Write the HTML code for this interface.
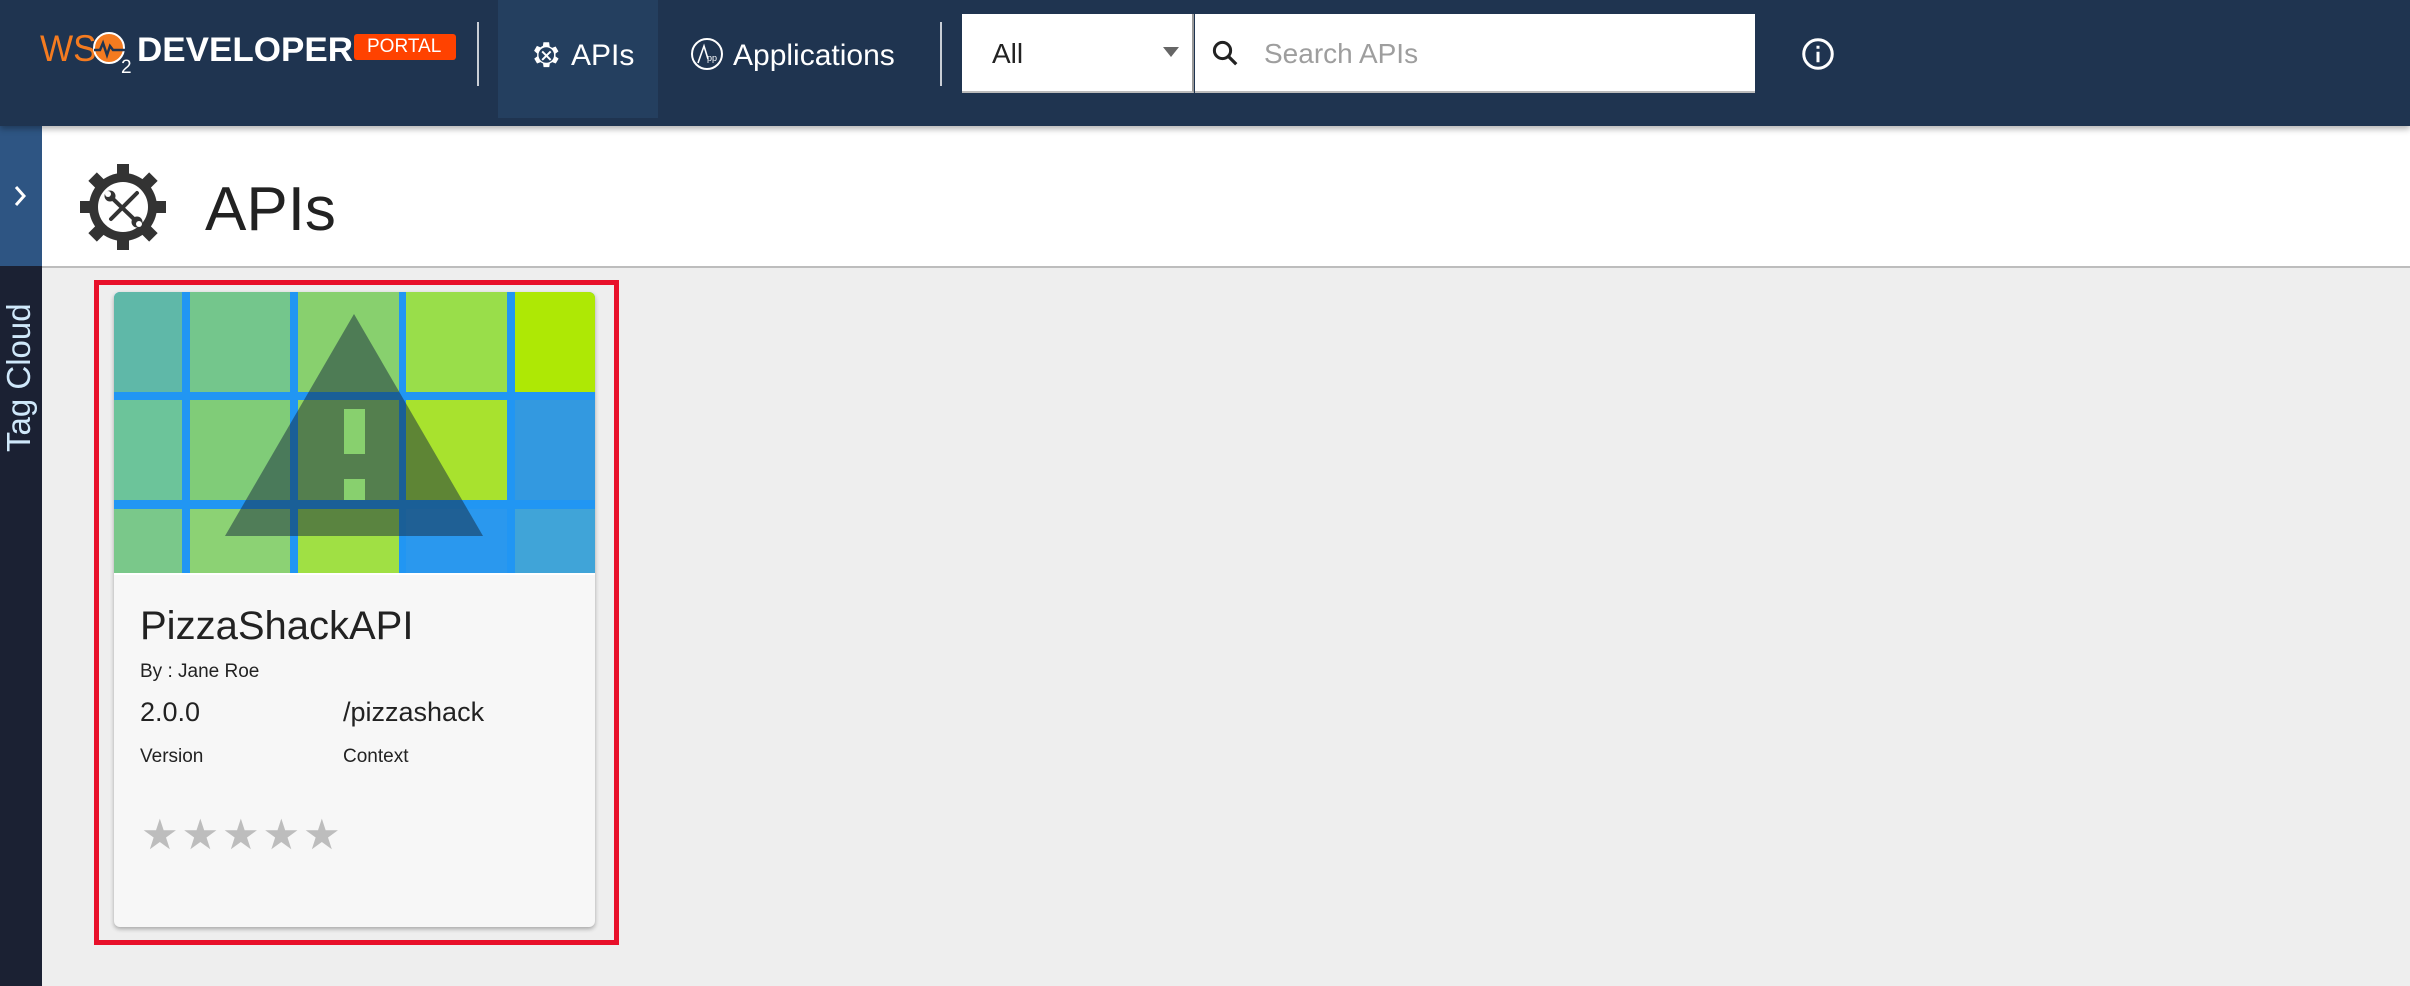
<!DOCTYPE html>
<html><head><meta charset="utf-8"><style>
*{margin:0;padding:0;box-sizing:border-box}
body{width:2410px;height:986px;overflow:hidden;background:#eeeeee;font-family:"Liberation Sans",sans-serif;position:relative}
.hdr{position:absolute;left:0;top:0;width:2410px;height:126px;background:#1f3450;box-shadow:0 3px 6px rgba(0,0,0,.3);z-index:2}
.abs{position:absolute}
.side{position:absolute;left:0;top:126px;width:42px;height:860px;background:#1b2133}
.tog{position:absolute;left:0;top:126px;width:42px;height:140px;background:#2e5583}
.title{position:absolute;left:42px;top:126px;width:2368px;height:142px;background:#fff;border-bottom:2px solid #bdbdbd}
.st{display:inline-block;width:40.5px;text-align:left}
</style></head><body>
<div class="hdr">
  <div class="abs" style="left:40px;top:28px;font-size:37px;color:#f47b20;transform-origin:0 0;transform:scaleX(0.95);white-space:nowrap">WS</div>
  <svg class="abs" style="left:92px;top:30px" width="46" height="44" viewBox="0 0 46 44"><circle cx="17" cy="18" r="15" fill="#f47b20" stroke="#fff" stroke-width="2"/><path d="M2 20 H8 L11 13 L15 25 L18 16 L21 20 H33" stroke="#1f3450" stroke-width="2.5" fill="none"/><text x="29" y="43" font-size="19" fill="#fff" font-family="Liberation Sans">2</text></svg>
  <div class="abs" style="left:137px;top:31px;font-size:34px;font-weight:bold;color:#fff;white-space:nowrap;transform-origin:0 0;transform:scaleX(1.03)">DEVELOPER</div>
  <div class="abs" style="left:354px;top:34px;width:102px;height:26px;background:#ff4200;border-radius:3px;color:#fff;font-size:19px;line-height:26px;padding-left:13px">PORTAL</div>
  <div class="abs" style="left:477px;top:22px;width:2px;height:64px;background:#c9ced6"></div>
  <div class="abs" style="left:498px;top:0;width:160px;height:118px;background:#243f5f"></div>
  <svg class="abs" style="left:528px;top:38px" width="34" height="34" viewBox="0 0 24 24"><path fill="#fff" d="M19.4 13a7.5 7.5 0 000-2l2.1-1.6-2-3.4-2.5 1a7 7 0 00-1.7-1L14.9 3h-4l-.4 2.6a7 7 0 00-1.7 1l-2.5-1-2 3.4L6.5 11a7.5 7.5 0 000 2l-2.1 1.6 2 3.4 2.5-1a7 7 0 001.7 1l.4 2.6h4l.4-2.6a7 7 0 001.7-1l2.5 1 2-3.4zM12.9 17.5a5.5 5.5 0 110-11 5.5 5.5 0 010 11z"/><path d="M10 9.5l6 6M16 9.5l-6 6" stroke="#fff" stroke-width="1.4"/></svg>
  <div class="abs" style="left:571px;top:39px;font-size:30px;color:#fff">APIs</div>
  <svg class="abs" style="left:690px;top:37px" width="34" height="34" viewBox="0 0 34 34"><circle cx="17" cy="17" r="15" stroke="#fff" stroke-width="2" fill="none"/><path d="M8 26 L14 9 L18 22" stroke="#fff" stroke-width="1.6" fill="none"/><text x="17" y="24" font-size="9" fill="#fff" font-family="Liberation Sans">pp</text></svg>
  <div class="abs" style="left:733px;top:39px;font-size:30px;color:#fff">Applications</div>
  <div class="abs" style="left:940px;top:22px;width:2px;height:64px;background:#c9ced6"></div>
  <div class="abs" style="left:962px;top:14px;width:232px;height:79px;background:#fff;border-bottom:2px solid #bbb;border-right:2px solid #999"></div>
  <div class="abs" style="left:992px;top:38px;font-size:28px;color:#222">All</div>
  <div class="abs" style="left:1163px;top:47px;width:0;height:0;border-left:8px solid transparent;border-right:8px solid transparent;border-top:10px solid #666"></div>
  <div class="abs" style="left:1195px;top:14px;width:560px;height:79px;background:#fff;border-bottom:2px solid #bbb"></div>
  <svg class="abs" style="left:1210px;top:37px" width="30" height="32" viewBox="0 0 24 24"><circle cx="10" cy="10" r="6.5" stroke="#222" stroke-width="2.4" fill="none"/><path d="M14.5 14.5 L21 21" stroke="#222" stroke-width="2.6"/></svg>
  <div class="abs" style="left:1264px;top:38px;font-size:28px;color:#9e9e9e">Search APIs</div>
  <svg class="abs" style="left:1800px;top:36px" width="36" height="36" viewBox="0 0 24 24"><circle cx="12" cy="12" r="9.5" stroke="#fff" stroke-width="2" fill="none"/><rect x="11" y="10.5" width="2" height="7" fill="#fff"/><rect x="11" y="6.5" width="2" height="2" fill="#fff"/></svg>
</div>
<div class="side"></div>
<div class="tog"></div>
<svg class="abs" style="left:10px;top:183px" width="20" height="26" viewBox="0 0 20 26"><path d="M6 4 L14 13 L6 22" stroke="#fff" stroke-width="3" fill="none"/></svg>
<div class="abs" style="left:0px;top:452px;transform-origin:0 0;transform:rotate(-90deg);font-size:33px;color:#cfe8fa;white-space:nowrap;line-height:38px">Tag Cloud</div>
<div class="title"></div>
<svg class="abs" style="left:79px;top:163px" width="88" height="88" viewBox="-44 -44 88 88">
  <g fill="#333">
    <circle r="34"/>
    <rect x="-6" y="-43" width="12" height="14"/>
    <rect x="-6" y="-43" width="12" height="14" transform="rotate(45)"/>
    <rect x="-6" y="-43" width="12" height="14" transform="rotate(90)"/>
    <rect x="-6" y="-43" width="12" height="14" transform="rotate(135)"/>
    <rect x="-6" y="-43" width="12" height="14" transform="rotate(180)"/>
    <rect x="-6" y="-43" width="12" height="14" transform="rotate(225)"/>
    <rect x="-6" y="-43" width="12" height="14" transform="rotate(270)"/>
    <rect x="-6" y="-43" width="12" height="14" transform="rotate(315)"/>
  </g>
  <circle r="25" fill="#fff"/>
  <path d="M-12 -10 L14 15 M14 -14 L-12 12" stroke="#333" stroke-width="4" stroke-linecap="round"/>
  <circle cx="-13" cy="-11" r="5.5" fill="#333"/><circle cx="-15" cy="-13" r="3" fill="#fff"/>
  <circle cx="14" cy="15" r="5.5" fill="#333"/><circle cx="16" cy="17" r="3" fill="#fff"/>
</svg>
<div class="abs" style="left:205px;top:174px;font-size:62px;color:#222">APIs</div>

<div class="abs" style="left:94px;top:280px;width:525px;height:665px;border:5px solid #e8102a"></div>
<div class="abs" style="left:114px;top:292px;width:481px;height:635px;background:#f7f7f7;border-radius:6px;box-shadow:0 2px 4px rgba(0,0,0,.3);overflow:hidden">
  <svg width="481" height="281" viewBox="0 0 481 281" style="display:block">
    <rect width="481" height="281" fill="#2196f3"/>
    <rect x="0" y="0" width="68" height="100" fill="#5fb8a8"/>
    <rect x="76" y="0" width="100" height="100" fill="#74c68c"/>
    <rect x="184" y="0" width="101" height="100" fill="#88d06e"/>
    <rect x="292" y="0" width="101" height="100" fill="#99de4a"/>
    <rect x="401" y="0" width="80" height="100" fill="#aee805"/>
    <rect x="0" y="108" width="68" height="100" fill="#6cc49a"/>
    <rect x="76" y="108" width="100" height="100" fill="#80cc78"/>
    <rect x="184" y="108" width="101" height="100" fill="#94d660"/>
    <rect x="292" y="108" width="101" height="100" fill="#a8e22e"/>
    <rect x="401" y="108" width="80" height="100" fill="#3399e0"/>
    <rect x="0" y="217" width="68" height="64" fill="#7ac88a"/>
    <rect x="76" y="217" width="100" height="64" fill="#8cd274"/>
    <rect x="184" y="217" width="101" height="64" fill="#a0e044"/>
    <rect x="292" y="217" width="101" height="64" fill="#2a98ee"/>
    <rect x="401" y="217" width="80" height="64" fill="#40a4d8"/>
    <path d="M240 22 L369 244 L111 244 Z" fill="rgb(20,40,60)" fill-opacity="0.5"/>
    <rect x="230" y="117" width="21" height="45" fill="#88d06e"/>
    <rect x="230" y="187" width="21" height="21" fill="#88d06e"/>
  </svg>
  <div style="height:2px;background:#fff"></div>
  <div class="abs" style="left:26px;top:312px;font-size:40px;color:#222">PizzaShackAPI</div>
  <div class="abs" style="left:26px;top:369px;font-size:19px;color:#222">By : Jane Roe</div>
  <div class="abs" style="left:26px;top:405px;font-size:27px;color:#222">2.0.0</div>
  <div class="abs" style="left:229px;top:405px;font-size:27px;color:#222">/pizzashack</div>
  <div class="abs" style="left:26px;top:454px;font-size:19px;color:#222">Version</div>
  <div class="abs" style="left:229px;top:454px;font-size:19px;color:#222">Context</div>
  <div class="abs" style="left:27px;top:520px;font-size:42px;color:#bdbdbd;line-height:46px;white-space:nowrap"><span class="st">★</span><span class="st">★</span><span class="st">★</span><span class="st">★</span><span class="st">★</span></div>
</div>
</body></html>
